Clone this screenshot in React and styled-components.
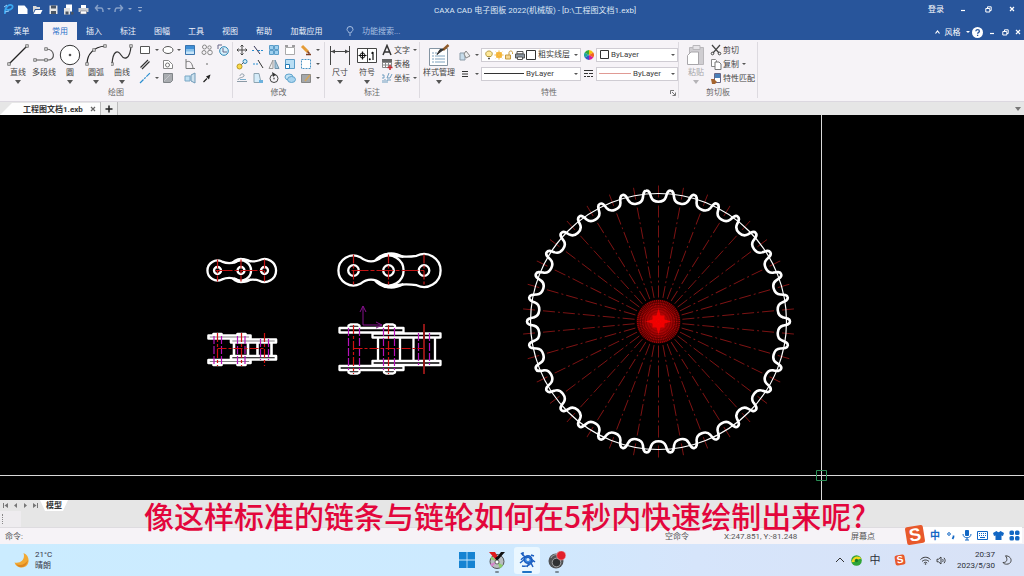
import React from 'react';
import styled, { createGlobalStyle, css } from 'styled-components';

const GlobalStyle = createGlobalStyle`
  * { box-sizing: border-box; }
  body {
    margin: 0;
    background: #000;
    font-family: Roboto, "Noto Sans CJK SC", sans-serif;
    font-size: 8px;
    line-height: 11px;
    color: #3c3c3c;
  }
  button, input, select {
    margin: 0;
    padding: 0;
    border: 0;
    background: none;
    font: inherit;
    color: inherit;
  }
  svg { display: block; flex: none; }
`;
const Page = styled.div`
  position: relative;
  display: flex;
  flex-direction: column;
  min-height: 100vh;
  overflow: hidden;
`;
const TitleBar = styled.header`
  display: flex;
  align-items: center;
  height: 20px;
  padding-bottom: 2px;
  background: #28559b;
  color: #dfe8f5;
`;
const QuickAccess = styled.div`
  display: flex;
  align-items: center;
  width: 148px;
`;
const QuickButton = styled.button`
  display: flex;
  align-items: center;
  justify-content: center;
  width: ${(p) => (p.$narrow ? '6px' : '16px')};
  height: 16px;
  opacity: ${(p) => (p.$dim ? 0.5 : 1)};
`;
const Title = styled.h1`
  flex: 1;
  margin: 0;
  padding-top: 2px;
  font-size: 8px;
  font-weight: 400;
  text-align: center;
  white-space: nowrap;
`;
const WindowButtons = styled.div`
  display: flex;
  align-items: center;
  color: #fff;
`;
const WindowButton = styled.button`
  display: flex;
  align-items: center;
  justify-content: center;
  gap: 5px;
  width: ${(p) => p.$w || 24}px;
  height: 16px;
  white-space: nowrap;
`;
const RibbonTabs = styled.nav`
  display: flex;
  align-items: flex-end;
  height: 20px;
  background: #28559b;
  color: #eef3fa;
`;
const RibbonTab = styled.button`
  width: ${(p) => p.$w || 34}px;
  height: 18px;
  white-space: nowrap;
  ${(p) =>
    p.$active &&
    css`
      background: #f6f3f7;
      color: #2a6fc9;
    `}
`;
const SearchBox = styled.label`
  display: flex;
  align-items: center;
  flex: 1;
  gap: 8px;
  height: 18px;
  padding-left: 14px;
  input {
    width: 80px;
    outline: 0;
  }
  input::placeholder {
    color: #a9c0e2;
  }
`;
const Ribbon = styled.section`
  display: flex;
  height: 62px;
  background: #f6f3f7;
  border-bottom: 1px solid #dcd8e0;
`;
const Group = styled.div`
  position: relative;
  display: flex;
  flex-direction: column;
  width: ${(p) => p.$w}px;
  margin: 2px 0 3px;
  border-right: 1px solid #dddae0;
`;
const GroupBody = styled.div`
  display: flex;
  height: 45px;
  padding-left: ${(p) => p.$pad || 0}px;
`;
const GroupName = styled.div`
  text-align: center;
  color: #6a6a6a;
`;
const BigButton = styled.button`
  display: flex;
  flex-direction: column;
  align-items: center;
  width: ${(p) => p.$w || 26}px;
  padding-top: 2px;
  white-space: nowrap;
  color: ${(p) => (p.$off ? '#a8a6aa' : '#444')};
  span {
    margin: 1px 0 2px;
  }
`;
const ToolGrid = styled.div`
  display: grid;
  grid-template-columns: ${(p) => p.$cols};
  grid-template-rows: repeat(3, 14px);
  padding-top: 1px;
`;
const Tool = styled.button`
  display: flex;
  align-items: center;
  justify-content: center;
`;
const ToolList = styled.div`
  display: flex;
  flex-direction: column;
  padding-top: 1px;
`;
const ToolRow = styled.button`
  display: flex;
  align-items: center;
  gap: 1px;
  height: 14px;
  white-space: nowrap;
  color: #444;
`;
const Props = styled.div`
  display: grid;
  grid-template-columns: 16px 8px 100px 15px 82px;
  grid-template-rows: repeat(2, 19px);
  align-items: center;
  justify-items: center;
  padding-top: 3px;
`;
const Combo = styled.label`
  display: flex;
  align-items: center;
  width: 100%;
  height: 14px;
  padding: 0 2px 0 ${(p) => p.$pad || 2}px;
  border: 1px solid #cfccd3;
  background: #fff;
  select {
    flex: 1;
    min-width: 0;
    height: 12px;
    padding-left: 2px;
    appearance: none;
    outline: 0;
    text-align: ${(p) => (p.$center ? 'center' : 'left')};
  }
`;
const Launcher = styled.button`
  position: absolute;
  right: 2px;
  bottom: 2px;
`;
const DocTabs = styled.div`
  display: flex;
  align-items: flex-end;
  height: 13px;
  background: #e6e6e6;
`;
const DocTab = styled.div`
  display: flex;
  align-items: center;
  width: 100px;
  height: 12px;
  padding-left: 23px;
  background: #fdfdfd;
  clip-path: polygon(12px 0, 100% 0, 100% 100%, 0 100%);
  font-weight: 700;
  color: #333;
  white-space: nowrap;
  button {
    margin-left: auto;
    padding-right: 4px;
  }
`;
const AddTab = styled.button`
  display: flex;
  align-items: center;
  justify-content: center;
  width: 18px;
  height: 13px;
  border: 1px solid #bbb;
  border-width: 0 1px;
  background: #eee;
`;
const TabMenu = styled.button`
  margin: 0 3px 4px auto;
`;
const Canvas = styled.main`
  flex: 1;
  min-height: 0;
  background: #000;
  svg {
    width: 100%;
    height: auto;
  }
`;
const SheetBar = styled.div`
  display: flex;
  height: 11px;
  background: #e6e6e6;
`;
const SheetNav = styled.button`
  width: 10px;
  display: flex;
  align-items: center;
  justify-content: center;
`;
const SheetTab = styled.button`
  width: 28px;
  height: 11px;
  background: #fff;
  clip-path: polygon(0 0, 100% 0, 23px 100%, 5px 100%);
  font-weight: 700;
  color: #333;
`;
const CommandArea = styled.div`
  height: 17px;
  background: #e6e6e6;
  border-bottom: 1px solid #dedce0;
`;
const Grip = styled.div`
  width: 21px;
  height: 16px;
  padding: 3px 2px;
  background: #eeecef;
  &::before {
    content: '';
    display: block;
    height: 10px;
    border-left: 1px dotted #888;
  }
`;
const StatusBar = styled.footer`
  display: grid;
  grid-template-columns: 1fr 59px 127px 173px;
  align-items: center;
  height: 16px;
  padding-left: 5px;
  background: #f6f3f7;
  color: #555;
  white-space: nowrap;
  label {
    display: flex;
  }
  input {
    flex: 1;
    outline: 0;
  }
`;
const Subtitle = styled.p`
  position: absolute;
  left: 0;
  right: 14px;
  bottom: 46px;
  margin: 0;
  text-align: center;
  font-size: 30px;
  line-height: 30px;
  font-weight: 500;
  font-family: "Noto Sans CJK SC", sans-serif;
  color: #e3063c;
  white-space: nowrap;
`;
const ImeBar = styled.div`
  position: absolute;
  right: 2px;
  bottom: 33px;
  display: flex;
  align-items: center;
  width: 114px;
  height: 16px;
  padding-left: 19px;
  background: #fff;
  color: #1267c4;
`;
const ImeButton = styled.button`
  display: flex;
  align-items: center;
  justify-content: center;
  width: 16px;
  height: 16px;
  font-size: 10px;
  font-weight: 700;
`;
const SogouMark = styled.span`
  display: flex;
  align-items: center;
  justify-content: center;
  width: ${(p) => p.$size}px;
  height: ${(p) => p.$size}px;
  border-radius: 2px;
  background: #e8592b;
  color: #fff;
  font-family: "Liberation Sans", sans-serif;
  font-weight: 700;
  font-size: ${(p) => p.$size}px;
  line-height: ${(p) => p.$size}px;
  transform: rotate(-9deg);
`;
const ImeLogo = styled.div`
  position: absolute;
  left: -2px;
  bottom: -1px;
`;
const Taskbar = styled.div`
  display: grid;
  grid-template-columns: 1fr auto 1fr;
  align-items: center;
  height: 32px;
  background: linear-gradient(90deg, #cbecff 0%, #cdeaff 45%, #d6e5fb 68%, #d9e2f6 100%);
`;
const Weather = styled.div`
  display: flex;
  align-items: center;
  gap: 5px;
  padding-left: 14px;
  color: #334;
`;
const TaskButtons = styled.div`
  display: flex;
  gap: 4px;
`;
const TaskButton = styled.button`
  display: flex;
  flex-direction: column;
  align-items: center;
  width: 26px;
  height: 27px;
  padding-top: 4px;
  border-radius: 3px;
  background: ${(p) => (p.$active ? '#eaf7ff' : 'none')};
  &::after {
    content: '';
    width: ${(p) => (p.$active ? 10 : 4)}px;
    height: 2px;
    margin-top: 2px;
    border-radius: 1px;
    background: ${(p) => (p.$active ? '#1d72c4' : p.$idle ? 'transparent' : '#7d8b97')};
  }
`;
const Tray = styled.div`
  display: flex;
  align-items: center;
  justify-content: flex-end;
  padding-right: 10px;
  color: #2b2f38;
`;
const TrayButton = styled.button`
  display: flex;
  align-items: center;
  justify-content: center;
  width: ${(p) => p.$w || 16}px;
  font-size: 11px;
`;
const Clock = styled.div`
  width: 48px;
  margin-right: 5px;
  text-align: right;
`;

const Svg = ({ s = 12, w, h, children, ...rest }) => (
  <svg
    width={w || s}
    height={h || s}
    viewBox={`0 0 ${w || s} ${h || s}`}
    fill="none"
    stroke="#555"
    aria-hidden="true"
    {...rest}
  >
    {children}
  </svg>
);
const Caret = ({ color = '#555', big }) =>
  big ? (
    <Svg w={6} h={4} stroke="none">
      <path d="M0 0h6L3 4z" fill={color} />
    </Svg>
  ) : (
    <Svg w={4} h={2} stroke="none">
      <path d="M0 0h4L2 2z" fill={color} />
    </Svg>
  );
const Node = ({ x, y }) => (
  <rect x={x - 1.2} y={y - 1.2} width="2.4" height="2.4" fill="#fff" strokeWidth=".8" />
);

const drawTools = [
  {
    label: '直线',
    icon: (
      <>
        <path d="M2 20 20 2" stroke="#222" strokeWidth="1.3" />
        <Node x={2} y={20} />
        <Node x={20} y={2} />
      </>
    ),
  },
  {
    label: '多段线',
    icon: (
      <>
        <path d="M2 16h13c8 0 7-11-2-11" stroke="#555" strokeWidth="1.2" />
        <Node x={2} y={16} />
        <Node x={13} y={16} />
        <Node x={13} y={5} />
      </>
    ),
    noCaret: true,
  },
  {
    label: '圆',
    icon: (
      <>
        <circle cx="11" cy="11" r="9.7" fill="#fff" stroke="#333" />
        <circle cx="11" cy="11" r="1.3" fill="#555" stroke="none" />
      </>
    ),
  },
  {
    label: '圆弧',
    icon: (
      <>
        <path d="M2 20C2 10 9 3 20 2" stroke="#222" strokeWidth="1.2" />
        <Node x={2} y={20} />
        <Node x={9} y={6} />
        <Node x={20} y={2} />
      </>
    ),
  },
  {
    label: '曲线',
    icon: (
      <>
        <path d="M1 20C2 6 7 6 10 11s9 5 10-9" stroke="#333" strokeWidth="1.2" />
        <Node x={1} y={20} />
        <Node x={20} y={2} />
      </>
    ),
  },
];
const caretCell = 'caret';
const drawSmall = [
  ['矩形', <path d="M1.5 2.5h9v7h-9z" fill="#fff" />],
  caretCell,
  ['椭圆', <ellipse cx="6" cy="6" rx="5" ry="3.5" fill="#fff" />],
  caretCell,
  ['填充', <><path d="M1.5 1.5h9v9h-9z" fill="#3f8fd6" stroke="#3a74ad" /><path d="M2 5h8v3H2z" fill="#86c0ea" stroke="none" /><path d="M2 7.5h8V10H2z" fill="#c9e5f8" stroke="none" /></>],
  ['块', <g stroke="#888"><circle cx="3.500" cy="3" r="2" /><circle cx="8.500" cy="3.500" r="1.700" /><circle cx="3" cy="8.500" r="2" /><circle cx="9" cy="8.500" r="2.300" /></g>],
  ['图库', <><circle cx="7" cy="7" r="4.300" fill="#d6effb" stroke="#2e86b5" /><path d="M1 5V1h4M6 4v4h4" stroke="#668" /></>],
  ['平行线', <path d="M1.500 9.500 9 2M3 11l7.500-7.500" stroke="#333" strokeWidth="1.200" />],
  null,
  ['轮廓', <><path d="M1.500 10.500v-8h5l4 4v4z" fill="#fff" stroke="#888" /><circle cx="5.500" cy="7" r="2" stroke="#777" /></>],
  null,
  ['公式曲线', <path d="M2 1v9.500h9M2 4c4-2 6 1 7 6" stroke="#777" />],
  ['点', <circle cx="6" cy="6" r="1" fill="#999" stroke="none" />],
  null,
  ['中心线', <path d="M1 11 11 1" stroke="#2b8fd0" strokeWidth="1.200" strokeDasharray="5 1 2 1" />],
  caretCell,
  ['剖面线', <><path d="M1.500 1.500h9v7l-2 2h-7z" fill="#a9acb0" stroke="#808488" /><path d="M2 9 8 3" stroke="#c4c7ca" /></>],
  null,
  ['局部放大', <><path d="M1 4h5v5H1z" fill="#bfe0f3" stroke="#7ba7c4" /><path d="M7 3l4-2v10L7 9z" fill="#cfe2ee" stroke="#6f9ab8" /></>],
  ['箭头', <><path d="M2.500 10 6 6.500" stroke="#222" strokeWidth="1.200" /><path d="M9.500 2.500 8 7.500 5 4.500z" fill="#222" stroke="none" /></>],
  null,
];
const editSmall = [
  ['平移', <path d="M6 1v10M1 6h10M4.500 2.500 6 1l1.500 1.500M4.500 9.500 6 11l1.500-1.500M2.500 4.500 1 6l1.500 1.500M9.500 4.500 11 6 9.500 7.500" stroke="#444" />],
  ['裁剪', <><path d="M0 6.500h3M6 6.500h6" stroke="#2b8fd0" strokeDasharray="2 1" /><path d="M2 2l6 8" stroke="#335" /></>],
  ['阵列', <path d="M1.500 1.500h4v4h-4zM6.500 1.500h4v4h-4zM1.500 6.500h4v4h-4zM6.500 6.500h4v4h-4z" fill="#9fd0ef" stroke="#5a9dc9" />],
  ['拉伸', <><path d="M1.500 3.500h9v7h-9z" fill="#fff" stroke="#aaa" /><path d="M1 2h3M8 2h3" stroke="#444" /></>],
  ['删除', <><path d="M2 2l6 6" stroke="#e59c38" strokeWidth="3" /><path d="M6 10.500h5M7.500 7.500l2 2" stroke="#7b3b20" strokeWidth="1.500" /></>],
  caretCell,
  ['复制', <><circle cx="3.500" cy="8.500" r="2.500" fill="#fbd949" stroke="#b99a24" /><circle cx="9" cy="3.500" r="2" fill="#d4ecf9" stroke="#2e86b5" /><path d="M5.500 6.500l2-2" /></>],
  ['延伸', <><path d="M1 6h6" stroke="#2b8fd0" strokeDasharray="2 1" /><path d="M6 2l5 8" stroke="#333" /></>],
  ['镜像', <><path d="M5 2v8.500H1z" fill="#eee" stroke="#999" /><path d="M7 2v8.500h4z" fill="#a6c8de" stroke="#6f93aa" /></>],
  ['缩放', <><path d="M1.500 1.500h9v9h-9z" fill="#b9def4" stroke="#5a9dc9" /><path d="M1.500 6.500h4v4h-4z" fill="#fff" stroke="#247bb5" /></>],
  ['分解', <path d="M1.500 1.500h9v9h-9z" fill="#fff" stroke="#4a94c4" strokeDasharray="2 1" />],
  caretCell,
  ['等距线', <><path d="M1 9.500h10M2 8c0-3 7-2 6-5-1-2-4-1-4 1" stroke="#8b9aa6" /><path d="M4 7.500h6" stroke="#7ab0d0" /></>],
  ['过渡', <><path d="M2 1.500h5l2 9H2z" fill="#d5ecf9" stroke="#8fa4b1" /><path d="M7 8h4v3H7z" fill="#6db1dd" stroke="none" /></>],
  ['旋转', <><circle cx="6" cy="6.500" r="4" stroke="#444" /><circle cx="6" cy="6.500" r="1" fill="#777" stroke="none" /><path d="M4 0l4 2.500L5 5" fill="#333" stroke="none" /></>],
  ['打断', <><ellipse cx="5" cy="5" rx="4" ry="3" fill="#c3e3f6" stroke="#5fa3cc" /><ellipse cx="7.500" cy="7.500" rx="4" ry="3" fill="#a9d4ef" stroke="#5fa3cc" /></>],
  ['编辑', <><path d="M1.500 2.500h9v8h-9z" fill="#a4a8ab" stroke="#888" /><path d="M5 9l5-6" stroke="#d3a55c" strokeWidth="1.500" /></>],
  caretCell,
];
const toolCells = (cells) =>
  cells.map((cell, i) => {
    if (!cell) return <i key={i} />;
    if (cell === caretCell)
      return (
        <Tool key={i} aria-label="更多">
          <Caret />
        </Tool>
      );
    return (
      <Tool key={i} aria-label={cell[0]}>
        <Svg>{cell[1]}</Svg>
      </Tool>
    );
  });

const Restore = ({ color = '#fff' }) => (
  <Svg s={7} stroke={color}>
    <path d="M2.500 2V.8h3.700v3.700H5" />
    <path d="M.8 2.500h4v3.500h-4z" />
  </Svg>
);
const Close = ({ color = '#fff' }) => (
  <Svg s={6} stroke={color} strokeWidth="1.200">
    <path d="m1 1 4 4M5 1 1 5" />
  </Svg>
);
const Minimize = () => (
  <Svg s={6} stroke="#fff">
    <path d="M1 4.500h4" strokeWidth="1.200" />
  </Svg>
);

// sprocket: 34 teeth around (658.5, 321.5)
const TEETH = 34;
const polar = (x, y, deg) => {
  const a = (deg * Math.PI) / 180;
  return `${(x * Math.cos(a) - y * Math.sin(a)).toFixed(2)} ${(
    x * Math.sin(a) +
    y * Math.cos(a)
  ).toFixed(2)}`;
};
function sprocketPath() {
  var d = `M${polar(0, -119.8, 0)}`;
  for (let i = 0; i < TEETH; i++) {
    const a = (i * 360) / TEETH;
    const b = ((i + 1) * 360) / TEETH;
    d += `C${polar(3.5, -119.8, a)} ${polar(6.2, -121, a)} ${polar(7.4, -124.5, a)}`;
    d += `C${polar(8.4, -128, a)} ${polar(9.2, -131.3, a)} ${polar(12.1, -130.9, a)}`;
    d += `C${polar(-9.2, -131.3, b)} ${polar(-8.4, -128, b)} ${polar(-7.4, -124.5, b)}`;
    d += `C${polar(-6.2, -121, b)} ${polar(-3.5, -119.8, b)} ${polar(0, -119.8, b)}`;
  }
  return d + 'Z';
}
const angles = Array.from({ length: TEETH }, (_, i) => (i * 360) / TEETH);
const hub = Array.from({ length: TEETH * 2 }, (_, i) => (i * 180) / TEETH);

function Sprocket() {
  return (
    <g transform="translate(658.5 321.5)" fill="none">
      <defs>
        <radialGradient id="hub">
          <stop offset="0" stopColor="#f00" />
          <stop offset=".3" stopColor="#e00000" stopOpacity=".8" />
          <stop offset="1" stopColor="#900" stopOpacity=".45" />
        </radialGradient>
      </defs>
      <g stroke="#821414" strokeWidth=".9" strokeDasharray="12 3 2 3">
        {angles.map((a) => (
          <path key={a} d="M0-24V-137" transform={`rotate(${a})`} />
        ))}
      </g>
      <circle r="22" fill="url(#hub)" />
      <g stroke="#b00808" strokeWidth=".9" strokeDasharray="1.500 1">
        {hub.map((a) => (
          <path key={a} d="M0 0V-22" transform={`rotate(${a})`} />
        ))}
      </g>
      <path d="M0-13 2-6 6-6 6-2 13 0 6 2 6 6 2 6 0 13-2 6-6 6-6 2-13 0-6-2-6-6-2-6z" fill="#f00" fillOpacity=".8" />
      <circle r="128" stroke="#fff" strokeWidth="1.200" />
      <path d={sprocketPath()} stroke="#fff" strokeWidth="2.600" />
    </g>
  );
}

// top view of one chain, x holds the three pin centres
function ChainTop({ x, r, hole, waist }) {
  const y = 270.5;
  const [a, b, c] = x;
  const link = (p, q, rad, w) => {
    const m = (p + q) / 2;
    const k = rad * 0.45;
    return `M${p + k} ${y - rad * 0.89}Q${m} ${y - w} ${q - k} ${y - rad * 0.89}A${rad} ${rad} 0 1 1 ${q - k} ${y + rad * 0.89}Q${m} ${y + w} ${p + k} ${y + rad * 0.89}A${rad} ${rad} 0 1 1 ${p + k} ${y - rad * 0.89}z`;
  };
  return (
    <g fill="none">
      <g stroke="#fff" strokeWidth="2.300">
        <path d={link(b, c, r + 1.5, r - 2)} fill="#000" />
        <path d={link(a, b, r, waist)} fill="#000" />
        <path d={`M${b - r * 0.7} ${y - r * 0.75}Q${b} ${y - r * 1.45} ${b + r} ${y - r * 0.9}M${b - r * 0.7} ${y + r * 0.75}Q${b} ${y + r * 1.45} ${b + r} ${y + r * 0.9}`} />
        {x.map((cx) => (
          <circle key={cx} cx={cx} cy={y} r={hole} />
        ))}
      </g>
      <g stroke="#c41414" strokeWidth="1.200">
        <path d={`M${a - 2} ${y}H${c}`} strokeDasharray="17 2 4 2" />
        {x.map((cx) => (
          <path key={cx} d={`M${cx} ${y - r - 1}V${y + r + 1}`} strokeDasharray="9 2 3 2" />
        ))}
      </g>
    </g>
  );
}

function Drawing() {
  return (
    <svg viewBox="0 115 1024 385" role="img" aria-label="链条与链轮">
      <Sprocket />
      <ChainTop x={[217.5, 241, 264.5]} r={10} hole={3.5} waist={6} />
      <ChainTop x={[353.5, 388.5, 424]} r={15} hole={5.3} waist={5} />

      <g fill="none" stroke="#fff" strokeWidth="2.600" strokeLinejoin="round">
        <path d="M208.500 335.500h42v3h-42zM231 339.500h45v3h-45zM231 356h45v3.500h-45zM208.500 360h42v3h-42z" />
        <path d="M213.500 335v-1h8v1M237.500 335v-1h8v1M213.500 364v1h8v-1M237.500 364v1h8v-1" />
        <path d="M234 342v14M248 342v14M257.500 342v14M271.500 342v14" />
      </g>
      <g fill="none" stroke="#fff" strokeWidth="2.300" strokeLinejoin="round">
        <path d="M339.500 328h64v4.500h-64zM372.500 333.500h68v4h-68zM372.500 361h68v4h-68zM339.500 366h64v4h-64z" />
        <path d="M348.500 328v-2.500l2-1h7l2 1v2.500M384 328v-2.500l2-1h7l2 1v2.500M348.500 370v2.500l2 1h7l2-1v-2.500M384 370v2.500l2 1h7l2-1v-2.500" />
        <path d="M378 338v23M400 338v23M413.500 338v23M435 338v23" />
      </g>
      <g fill="none" stroke="#b512b8" strokeWidth="1.200" strokeDasharray="8 2">
        <path d="M214 336v28M221.500 336v28M237.500 336v28M245 336v28M260.500 339v21M268.500 339v21" />
        <path d="M348.500 328v42M359.500 328v42M383.500 328v42M394.500 328v42M418.500 333v32M429.500 333v32" />
      </g>
      <g fill="none" stroke="#d01010" strokeWidth="1.200" strokeDasharray="9 2 3 2">
        <path d="M217.500 348.500H265M217.500 333v33M241.500 333v33M264.500 333v33" />
        <path d="M353.500 348.500H425M353.500 325v49M388.500 325v49" />
        <path d="M424 324v50" stroke="#8e1616" strokeWidth="2" strokeDasharray="none" />
      </g>
      <path d="M363 306v19h19M360 312l3-6 3 6M376 322l6 3-6 3" fill="none" stroke="#84108c" />

      <g fill="none" stroke="#d8d8d8">
        <path d="M821.500 115v385M0 475.500h1024" />
        <path d="M816.500 470.500h10v10h-10z" stroke="#2a8f55" />
      </g>
    </svg>
  );
}

function Header() {
  return (
    <>
      <TitleBar>
        <QuickAccess>
          <QuickButton aria-label="CAXA">
            <Svg s={12} stroke="#3aa7f0">
              <path d="M3 11C2 3 9 0 10.500 3c1 3-4 5-7 3" strokeWidth="1.700" />
              <path d="M2 4l3-2M3 9l4-1" stroke="#9cd4ff" />
            </Svg>
          </QuickButton>
          <QuickButton aria-label="新建">
            <Svg s={11} stroke="none"><path d="M1 1.500h6.500L10.500 5v5H1z" fill="#fff" /></Svg>
          </QuickButton>
          <QuickButton aria-label="打开">
            <Svg s={11} stroke="none"><path d="M1 2h3l1 1h3v2H3L1 9z" fill="#d8d8d8" /><path d="M3.500 6h7l-2 4H1.500z" fill="#fff" /></Svg>
          </QuickButton>
          <QuickButton aria-label="保存">
            <Svg s={11} stroke="none"><path d="M1.500 1.500h8v8.500h-8z" fill="#e6e6e6" /><path d="M3 1.500h5v3H3zM3 7h5v3H3z" fill="#4a5563" /></Svg>
          </QuickButton>
          <QuickButton aria-label="另存为">
            <Svg s={11} stroke="none"><path d="M3 .5h6v7H3z" fill="#fff" /><path d="M1 4h6v6.500H1z" fill="#e0e0e0" /><path d="M2.500 7.500h3v3h-3zM8 8h2.500v2.500H8z" fill="#4a5563" /></Svg>
          </QuickButton>
          <QuickButton aria-label="打印">
            <Svg s={11} stroke="none"><path d="M3 1h5v3H3z" fill="#fff" /><path d="M.5 4h10v4H.5z" fill="#c9ccd0" /><path d="M2.500 7h6v3h-6z" fill="#fff" stroke="#667" strokeWidth=".5" /></Svg>
          </QuickButton>
          <QuickButton aria-label="撤销" $dim>
            <Svg s={10} stroke="#e0e8f4" strokeWidth="1.500"><path d="M4 1 1.500 4 4 7M1.500 4H7c2 0 2 2 2 4" /></Svg>
          </QuickButton>
          <QuickButton aria-label="撤销列表" $narrow $dim><Caret color="#fff" /></QuickButton>
          <QuickButton aria-label="重做" $dim>
            <Svg s={10} stroke="#e0e8f4" strokeWidth="1.500"><path d="m6 1 2.500 3L6 7M8.500 4H3C1 4 1 6 1 8" /></Svg>
          </QuickButton>
          <QuickButton aria-label="重做列表" $narrow $dim><Caret color="#fff" /></QuickButton>
          <QuickButton aria-label="自定义" $dim>
            <Svg w={4} h={5} stroke="none"><path d="M0 0h4v1H0zM0 3h4L2 5z" fill="#fff" /></Svg>
          </QuickButton>
        </QuickAccess>
        <Title>CAXA CAD 电子图板 2022(机械版) - [D:\工程图文档1.exb]</Title>
        <WindowButtons>
          <WindowButton $w={28}>登录</WindowButton>
          <WindowButton $w={26} aria-label="最小化"><Minimize /></WindowButton>
          <WindowButton aria-label="还原"><Restore /></WindowButton>
          <WindowButton aria-label="关闭"><Close /></WindowButton>
        </WindowButtons>
      </TitleBar>
      <RibbonTabs>
        <RibbonTab $w={43}>菜单</RibbonTab>
        <RibbonTab $active>常用</RibbonTab>
        {['插入', '标注', '图幅', '工具', '视图', '帮助'].map((name) => (
          <RibbonTab key={name}>{name}</RibbonTab>
        ))}
        <RibbonTab $w={51}>加载应用</RibbonTab>
        <SearchBox>
          <Svg w={8} h={10} stroke="#a9c0e2">
            <path d="M3 7C3 5.500 1 5 1 3.500a3 3 0 0 1 6 0C7 5 5 5.500 5 7zM3 9h2" />
          </Svg>
          <input placeholder="功能搜索..." aria-label="功能搜索" />
        </SearchBox>
        <WindowButtons>
          <WindowButton $w={36}>
            <Svg w={5} h={4} stroke="#fff" strokeWidth="1.200"><path d="M.5 3.500l2-2.500 2 2.500" /></Svg>
            风格
            <Caret color="#fff" />
          </WindowButton>
          <WindowButton $w={14} aria-label="帮助">
            <Svg s={11} stroke="#28559b" strokeWidth="1.300">
              <circle cx="5.500" cy="5.500" r="5.500" fill="#fff" stroke="none" />
              <path d="M3.800 4.200c.2-2 3.600-2 3.600 0 0 1.200-1.800 1.200-1.800 2.600M5.600 7.800v1.200" />
            </Svg>
          </WindowButton>
          <WindowButton $w={15} aria-label="最小化窗口"><Minimize /></WindowButton>
          <WindowButton $w={13} aria-label="还原窗口"><Restore /></WindowButton>
          <WindowButton $w={12} aria-label="关闭窗口"><Close /></WindowButton>
        </WindowButtons>
      </RibbonTabs>
    </>
  );
}

function RibbonPanel() {
  return (
    <Ribbon>
      <Group $w={233}>
        <GroupBody $pad={5}>
          {drawTools.map((tool) => (
            <BigButton key={tool.label}>
              <Svg s={22}>{tool.icon}</Svg>
              <span>{tool.label}</span>
              {!tool.noCaret && <Caret big />}
            </BigButton>
          ))}
          <ToolGrid $cols="20px 4px 18px 4px 18px 16px 16px">{toolCells(drawSmall)}</ToolGrid>
        </GroupBody>
        <GroupName>绘图</GroupName>
      </Group>
      <Group $w={92}>
        <GroupBody $pad={1}>
          <ToolGrid $cols="repeat(5, 16px) 8px">{toolCells(editSmall)}</ToolGrid>
        </GroupBody>
        <GroupName>修改</GroupName>
      </Group>
      <Group $w={95}>
        <GroupBody $pad={2}>
          <BigButton>
            <Svg s={22}><path d="M1.500 2v19M20.500 2v19M2 7.500h18" stroke="#444" /><path d="M2 7.500l4-2v4zM20 7.500l-4-2v4z" fill="#444" stroke="none" /></Svg>
            <span>尺寸</span>
            <Caret big />
          </BigButton>
          <BigButton $w={28}>
            <Svg s={22}>
              <path d="M1.500 4.500h19v14h-19zM11.500 4.500v14" fill="#fff" stroke="#444" />
              <circle cx="6.500" cy="11.500" r="2.500" stroke="#222" />
              <path d="M2.500 11.500h8M6.500 7.500v8M17 8v8M15.500 9.500 17 8" stroke="#111" strokeWidth="1.200" />
              <circle cx="13.800" cy="15.200" r="1" fill="#111" stroke="none" />
            </Svg>
            <span>符号</span>
            <Caret big />
          </BigButton>
          <ToolList>
            <ToolRow>
              <Svg stroke="#333" strokeWidth="1.500"><path d="M2 11 6 1.500 10 11M3.500 8h5" /></Svg>
              文字&nbsp;<Caret />
            </ToolRow>
            <ToolRow>
              <Svg><path d="M1.500 1.500h9v8h-9zM1.500 4.500h9M4.500 4v5M7.500 4v5M1.500 7h9" fill="#fff" stroke="#888" /><path d="M1 1h10v3H1z" fill="#666" stroke="none" /><path d="M9 7v5M6.500 9.500h5" stroke="#c2272d" strokeWidth="1.500" /></Svg>
              表格
            </ToolRow>
            <ToolRow>
              <Svg stroke="#6f9dbf"><path d="M1 3h2v3H1M2 11V8M4 11V7M6 11V8h4M8 1l-2 5h3l2-4" /></Svg>
              坐标&nbsp;<Caret />
            </ToolRow>
          </ToolList>
        </GroupBody>
        <GroupName>标注</GroupName>
      </Group>
      <Group $w={259}>
        <GroupBody $pad={1}>
          <BigButton $w={36}>
            <Svg s={22}>
              <path d="M1.500 4.500h18v17h-18z" fill="#fff" stroke="#8595a3" />
              <path d="M4 9h5M4 12h13M4 15h13M4 18h13" stroke="#7fa3bf" strokeDasharray="2 1 20" />
              <path d="M20.500 1 15 6" stroke="#8f5a2a" strokeWidth="2.500" />
              <path d="M15.500 5.500 9 10.500l3-5z" fill="#333" stroke="#333" />
            </Svg>
            <span>样式管理</span>
            <Caret big />
          </BigButton>
          <Props>
            <Tool aria-label="图层">
              <Svg><path d="M1 4h5v7H1z" fill="#c7dceb" stroke="#8b9ba8" /><path d="M5 5l2-3 4 5-4 2z" fill="#eee" stroke="#888" /></Svg>
            </Tool>
            <Caret />
            <Combo>
              <Svg s={10}><path d="M3 6.500C0 3 3 1 5 1s5 2 2 5.500z" fill="#ffe99a" stroke="#b49a42" /><path d="M4 8.500h2" strokeWidth="1.500" /></Svg>
              <Svg s={10} stroke="#f6bd4a"><circle cx="5" cy="5" r="3" fill="#f6ae2d" /><path d="M5 0v10M0 5h10M1.500 1.500l7 7M8.500 1.500l-7 7" strokeWidth=".6" /></Svg>
              <Svg s={10} stroke="#c79a3d"><path d="M1.500 5h5v4h-5z" fill="#f4d796" /><path d="M5 5V2.500C5 .5 8.500.5 8.500 2.500V4" /></Svg>
              <Svg s={12}><path d="M3 2.500h6V5H3z" fill="#fff" /><path d="M1.500 5h9v4h-9z" fill="#8b97a3" /><path d="M3.500 8h5v2.500h-5z" fill="#fff" /></Svg>
              <Svg s={10}><path d="M.5.5h9v9h-9z" fill="#fff" stroke="#333" /></Svg>
              <select aria-label="图层"><option>粗实线层</option></select>
              <Caret />
            </Combo>
            <Svg s={10} stroke="none">
              <path d="M5 5V0a5 5 0 0 1 4.300 2.500z" fill="#f4c20d" />
              <path d="M5 5l4.300-2.500a5 5 0 0 1 0 5z" fill="#f26522" />
              <path d="M5 5l4.300 2.500A5 5 0 0 1 5 10z" fill="#d4209a" />
              <path d="M5 5v5A5 5 0 0 1 .7 7.500z" fill="#3558c9" />
              <path d="M5 5 .7 7.500a5 5 0 0 1 0-5z" fill="#1fa6a0" />
              <path d="M5 5 .7 2.500A5 5 0 0 1 5 0z" fill="#37a93c" />
            </Svg>
            <Combo $pad={3}>
              <Svg s={9}><path d="M.5.5h8v8h-8z" fill="#fff" stroke="#333" /></Svg>
              <select aria-label="颜色"><option>ByLayer</option></select>
              <Caret />
            </Combo>
            <Svg s={8}><path d="M1 1.500h6M1 4h6M1 6.500h6" stroke="#333" /></Svg>
            <Caret />
            <Combo>
              <Svg w={40} h={3}><path d="M0 1.500h40" stroke="#333" /></Svg>
              <select aria-label="线宽"><option>ByLayer</option></select>
              <Caret />
            </Combo>
            <Svg s={9}><path d="M0 1.500h9M0 4.500h4M5 4.500h4M0 7.500h2M3 7.500h3M7 7.500h2" stroke="#333" /></Svg>
            <Combo>
              <Svg w={32} h={3}><path d="M0 1.500h32" stroke="#e09a94" /></Svg>
              <select aria-label="线型"><option>ByLayer</option></select>
              <Caret />
            </Combo>
          </Props>
        </GroupBody>
        <GroupName>特性</GroupName>
        <Launcher aria-label="特性设置">
          <Svg s={6}><path d="M.5 4V.5H4M2 2l3 3M5.500 2.500v3h-3" strokeWidth=".8" /></Svg>
        </Launcher>
      </Group>
      <Group $w={79}>
        <GroupBody $pad={3}>
          <BigButton $w={28} $off>
            <Svg s={22}>
              <path d="M4.500 3.500h14v17h-14z" fill="#cfcdd1" stroke="#b9b7bb" />
              <path d="M8 1.500h7v4H8z" fill="#e6e4e8" stroke="#b9b7bb" />
              <path d="M2.500 11.500 6 8h7.500v12.500h-11z" fill="#fff" stroke="#a8a6aa" />
            </Svg>
            <span>粘贴</span>
            <Caret big color="#b5b3b7" />
          </BigButton>
          <ToolList>
            <ToolRow>
              <Svg stroke="#444"><path d="M2 1l7 8M10 1 3 9" strokeWidth="1.200" /><circle cx="2.500" cy="9.500" r="1.300" /><circle cx="9.500" cy="9.500" r="1.300" /></Svg>
              剪切
            </ToolRow>
            <ToolRow>
              <Svg><path d="M1.500 1.500h4l1 1v6h-5z" fill="#fff" stroke="#888" /><path d="M5 4h4l2 2v5.500H5z" fill="#fff" stroke="#777" /></Svg>
              复制&nbsp;<Caret />
            </ToolRow>
            <ToolRow>
              <Svg><path d="M4.500 1.500h6v9h-6z" fill="#fff" stroke="#668" /><path d="M5 2h5v4H5z" fill="#4a7fb8" stroke="none" /><path d="M1 7h3l3 3-2 2H2z" fill="#a5642f" stroke="none" /></Svg>
              特性匹配
            </ToolRow>
          </ToolList>
        </GroupBody>
        <GroupName>剪切板</GroupName>
      </Group>
    </Ribbon>
  );
}

function Taskbars() {
  return (
    <Taskbar>
      <Weather>
        <Svg s={16} stroke="none">
          <path d="M9.500 1C17 4 16 15 8 15.500 4 15.500 1.500 14 .5 10.500 7 12 11.500 7 9.500 1z" fill="#f2a933" />
          <path d="M2 12c4 2 9 1 12-4-1 5-4 7-7 7.200C5 15 3 14 2 12z" fill="#dd8620" />
        </Svg>
        <div>
          21°C
          <br />
          晴朗
        </div>
      </Weather>
      <TaskButtons>
        <TaskButton aria-label="开始" $idle>
          <Svg s={18} stroke="none"><path d="M1 1h7.600v7.600H1zM9.400 1H17v7.600H9.400zM1 9.400h7.600V17H1zM9.400 9.400H17V17H9.400z" fill="#1583d2" /></Svg>
        </TaskButton>
        <TaskButton aria-label="光盘工具">
          <Svg s={18} stroke="none">
            <circle cx="9" cy="10.500" r="7" fill="#b9bdc0" stroke="#333" strokeWidth=".8" />
            <path d="M9 10.500 2.500 8l1-3zM9 10.500l6 4-3 3z" fill="#8bd06b" />
            <path d="M9 10.500 4 16l-2-3z" fill="#d584c9" />
            <path d="M1 1h6l3 5-2 3z" fill="#e01b1b" />
            <path d="M10 5l3-4h4l-8 9-2-3z" fill="#111" />
            <circle cx="9" cy="11" r="2" fill="#fff" stroke="#333" strokeWidth=".7" />
          </Svg>
        </TaskButton>
        <TaskButton aria-label="CAXA" $active>
          <Svg s={18} stroke="#1c5fc0">
            <path d="M3 2l4 4M5 1v4M2 12l5-4M9 16l2-4M15 16l-2-4M13 4l3 1" strokeWidth="1.500" />
            <circle cx="10" cy="8.500" r="3.800" fill="#3a86e0" strokeWidth="1.500" />
            <path d="M3 9c3-5 9-3 14 2M4 15c5 1 9-2 11-5" strokeWidth="1.300" />
            <circle cx="10" cy="8.500" r="1.500" fill="#d8edff" stroke="none" />
          </Svg>
        </TaskButton>
        <TaskButton aria-label="录屏">
          <Svg s={18} stroke="none">
            <circle cx="8" cy="10" r="7.500" fill="#505254" />
            <path d="M3 7c1-3 5-4 7-3" stroke="#aaa" strokeWidth="1" fill="none" />
            <circle cx="8.500" cy="11.500" r="4.300" fill="#2f3133" stroke="#bbb" strokeWidth=".8" />
            <circle cx="13.200" cy="4.500" r="4.500" fill="#e2202c" stroke="#f3a0a4" strokeWidth=".6" />
          </Svg>
        </TaskButton>
      </TaskButtons>
      <Tray>
        <TrayButton aria-label="显示隐藏的图标"><Svg w={10} h={6} stroke="#333"><path d="m1 5 4-4 4 4" /></Svg></TrayButton>
        <TrayButton aria-label="安全卫士">
          <Svg s={11} stroke="none"><circle cx="5.500" cy="5.500" r="5.300" fill="#2fa437" /><path d="M.5 7C2 1 8 0 10.500 4 7 3 5 8 .5 7z" fill="#f5d71e" /><circle cx="5.500" cy="5.500" r="1.700" fill="#157a2a" /></Svg>
        </TrayButton>
        <TrayButton $w={22}>中</TrayButton>
        <TrayButton $w={28} aria-label="搜狗输入法"><SogouMark $size={10}>S</SogouMark></TrayButton>
        <TrayButton $w={22} aria-label="网络">
          <Svg w={11} h={9} stroke="#333"><path d="M.5 3.500c3-3 7-3 10 0M2 5.500c2-2 5-2 7 0M3.800 7c1-1 2.400-1 3.400 0" /><circle cx="5.500" cy="8" r=".8" fill="#333" stroke="none" /></Svg>
        </TrayButton>
        <TrayButton $w={11} aria-label="音量">
          <Svg w={11} h={9} stroke="#333" strokeWidth=".9"><path d="M1 3.200h1.500L5 1v7L2.500 5.800H1zM6.500 3c.8 1 .8 2 0 3M8 1.800c1.500 2 1.500 3.500 0 5.400" /></Svg>
        </TrayButton>
        <Clock>
          20:37
          <br />
          2023/5/30
        </Clock>
        <TrayButton $w={14} aria-label="专注助手">
          <Svg s={10} stroke="#444"><path d="M3.500.8c7 0 7.500 8.400 1 8.400C3 9.200 1.500 8.500 1 7.500c4 .3 5-3.500 2.500-6.700z" /></Svg>
        </TrayButton>
      </Tray>
    </Taskbar>
  );
}

export default function App() {
  return (
    <Page>
      <GlobalStyle />
      <Header />
      <RibbonPanel />
      <DocTabs>
        <DocTab>
          工程图文档1.exb
          <button aria-label="关闭文档"><Close color="#666" /></button>
        </DocTab>
        <AddTab aria-label="新建文档">
          <Svg s={8} stroke="#222" strokeWidth="1.500"><path d="M4 .5v7M.5 4h7" /></Svg>
        </AddTab>
        <TabMenu aria-label="文档列表"><Caret big color="#777" /></TabMenu>
      </DocTabs>
      <Canvas>
        <Drawing />
      </Canvas>
      <SheetBar>
        <SheetNav aria-label="第一页"><Svg s={5} stroke="none"><path d="M0 0h1v5H0zM5 0v5L1.500 2.500z" fill="#777" /></Svg></SheetNav>
        <SheetNav aria-label="上一页"><Svg s={5} stroke="none"><path d="M4 0v5L1 2.500z" fill="#777" /></Svg></SheetNav>
        <SheetNav aria-label="下一页"><Svg s={5} stroke="none"><path d="M1 0v5l3-2.500z" fill="#777" /></Svg></SheetNav>
        <SheetNav aria-label="最后一页"><Svg s={5} stroke="none"><path d="M4 0h1v5H4zM0 0v5l3.500-2.500z" fill="#777" /></Svg></SheetNav>
        <SheetTab>模型</SheetTab>
      </SheetBar>
      <CommandArea>
        <Grip />
      </CommandArea>
      <StatusBar>
        <label>
          命令:
          <input />
        </label>
        <span>空命令</span>
        <span>X:247.851, Y:-81.248</span>
        <span>屏幕点</span>
      </StatusBar>
      <Taskbars />
      <Subtitle>像这样标准的链条与链轮如何在5秒内快速绘制出来呢?</Subtitle>
      <ImeBar>
        <ImeLogo>
          <SogouMark $size={18}>S</SogouMark>
        </ImeLogo>
        <ImeButton>中</ImeButton>
        <ImeButton aria-label="标点">
          <Svg s={10} stroke="#1267c4"><circle cx="3" cy="4" r="1.300" /><path d="M7.500 5.500v1.500l-1 2" strokeWidth="1.700" /></Svg>
        </ImeButton>
        <ImeButton aria-label="语音">
          <Svg s={12} stroke="#1267c4"><path d="M4.500 1.500h3v5h-3z" fill="#1267c4" strokeLinejoin="round" /><path d="M2 5c0 5 8 5 8 0M6 9v2M4 11h4" /></Svg>
        </ImeButton>
        <ImeButton aria-label="键盘">
          <Svg s={11} stroke="#1267c4"><path d="M.5 1.500h10v8H.5z" /><path d="M2 3.500h7M2 5.500h7" strokeDasharray="1 1" /><path d="M3 7.500h5" /></Svg>
        </ImeButton>
        <ImeButton aria-label="皮肤">
          <Svg s={11} stroke="none"><path d="M3.500 1 0 3l1 3 1.500-.5V10h6V5.500L10 6l1-3-3.500-2c-1 1.500-3 1.500-4 0z" fill="#1267c4" /></Svg>
        </ImeButton>
        <ImeButton aria-label="工具箱">
          <Svg s={11} stroke="none" fill="#1267c4"><rect x=".5" y=".5" width="4.500" height="4.500" rx="1.500" /><rect x="6" y=".5" width="4.500" height="4.500" rx="1.500" /><rect x=".5" y="6" width="4.500" height="4.500" rx="1.500" /><rect x="6" y="6" width="4.500" height="4.500" rx="1.500" /></Svg>
        </ImeButton>
      </ImeBar>
    </Page>
  );
}
